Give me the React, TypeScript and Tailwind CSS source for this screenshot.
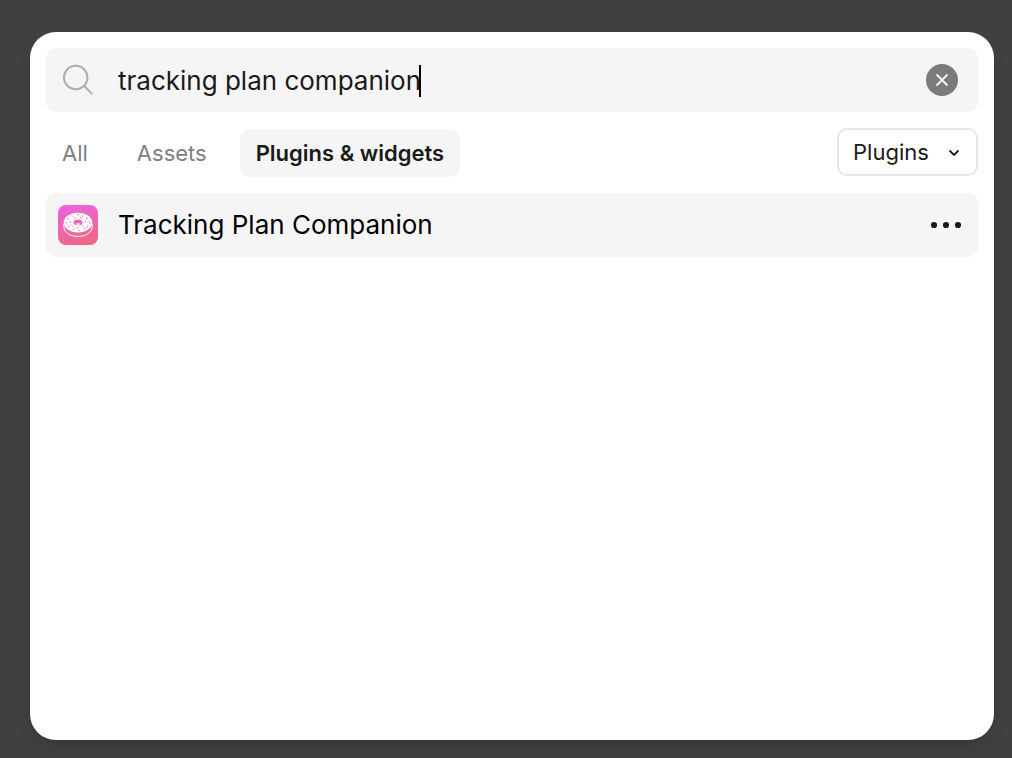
import { useState } from "react";

const sprinkles = [
  "M9.3 13.6l1 .7", "M14 10.6l.9.9", "M19.6 9.9l1.2-.4", "M25 10.6l-.6 1", "M29.5 13.2l-1.2.4",
  "M7.9 17.8l1.2-.4", "M12.3 16.4l.4 1.2", "M16.4 13.3l1.1-.5", "M22.3 12.5l1.1.5", "M27.2 16l.3 1.2",
  "M31.3 17l.4 1.1", "M9.9 21.5l1.1.3", "M13.8 20.4l1 .8", "M15 24.4l1-.6", "M19.2 22.7l1.2.3",
  "M20.8 25.6l1.1-.4", "M24.4 21.6l.8-.9", "M26.4 24l.7-1", "M29.7 20.8l-.4 1.2",
];

function DonutIcon() {
  return (
    <svg aria-hidden="true" className="size-10 shrink-0" viewBox="0 0 40 40" fill="none">
      <defs>
        <linearGradient id="pink" x1="0.35" y1="0" x2="0.65" y2="1">
          <stop stopColor="#ec63dc" />
          <stop offset="1" stopColor="#f06882" />
        </linearGradient>
      </defs>
      <rect width="40" height="40" rx="8" fill="url(#pink)" />
      <path d="M5.8 19v2.5c0 5.7 6.2 10 14.2 10s14.2-4.3 14.2-10V19" stroke="white" />
      <ellipse cx="20" cy="17.6" rx="14.3" ry="9.9" fill="white" />
      <ellipse cx="20" cy="17.4" rx="4.5" ry="2.9" fill="#ed65bb" />
      <path d="M17.2 19.1c1.2-1 4.4-1 5.6 0-1.2.9-4.4.9-5.6 0Z" fill="white" />
      <path d={sprinkles.join("")} stroke="#ed65b5" strokeWidth="0.9" strokeLinecap="round" />
    </svg>
  );
}

export default function App() {
  const [query, setQuery] = useState("tracking plan companion");
  return (
    <div className="flex min-h-screen flex-col bg-[#404040] pt-8 pr-[18px] pb-[18px] pl-[30px] font-['Inter',sans-serif] text-[#1a1a1a]">
      <main className="flex-1 rounded-[26px] bg-white p-4 shadow-lg">
        <div className="flex h-16 items-center rounded-[10px] bg-[#f5f5f5] pr-5 pl-4">
          <svg aria-hidden="true" className="size-8 shrink-0" viewBox="0 0 32 32" fill="none" stroke="#adadad" strokeWidth="2">
            <circle cx="13.7" cy="13.5" r="11.7" />
            <path d="m22 21.8 8.6 8.6" />
          </svg>
          <div className="relative ml-6 flex min-w-0 flex-1 pt-0.5">
            <input
              aria-label="Search"
              value={query}
              onChange={(e) => setQuery(e.target.value)}
              className="w-full min-w-0 bg-transparent text-[26px] leading-8 caret-transparent outline-none"
            />
            <span aria-hidden="true" className="pointer-events-none absolute inset-y-0 left-0 flex items-end text-[26px] leading-8 whitespace-pre">
              <span className="invisible">{query}</span>
              <span className="-ml-0.5 h-8 w-0.5 bg-black" />
            </span>
          </div>
          <button aria-label="Clear search" onClick={() => setQuery("")} className="size-8 shrink-0 rounded-full bg-[#7b7b7b]">
            <svg viewBox="0 0 32 32" fill="none" stroke="#f5f5f5" strokeWidth="1.9" strokeLinecap="round">
              <path d="m11 11 10 10m0-10L11 21" />
            </svg>
          </button>
        </div>
        <div className="mt-4 flex items-start justify-between">
          <nav className="mt-px flex h-12 gap-[17px] text-[22px] text-[#808080]">
            <button className="px-4">All</button>
            <button className="px-4">Assets</button>
            <button className="rounded-[10px] bg-[#f5f5f5] px-4 font-semibold text-[#1a1a1a]">Plugins &amp; widgets</button>
          </nav>
          <div className="relative">
            <select aria-label="Resource type" className="block h-12 w-[141px] appearance-none rounded-[10px] border-2 border-[#e6e6e6] bg-white pl-3.5 text-[22px] outline-none">
              <option>Plugins</option>
            </select>
            <svg aria-hidden="true" className="pointer-events-none absolute top-4 right-4 size-4" viewBox="0 0 16 16" fill="none" stroke="#1a1a1a" strokeWidth="1.8" strokeLinecap="round">
              <path d="m4 7 4 4 4-4" />
            </svg>
          </div>
        </div>
        <div className="mt-4 flex h-16 items-center rounded-[10px] bg-[#f5f5f5] pr-4 pl-3">
          <DonutIcon />
          <span className="ml-5 flex-1 text-[26px] leading-8 text-black">Tracking Plan Companion</span>
          <button aria-label="More options" className="size-8">
            <svg viewBox="0 0 32 32" fill="#1a1a1a">
              <circle cx="4" cy="16" r="3.1" />
              <circle cx="16" cy="16" r="3.1" />
              <circle cx="28" cy="16" r="3.1" />
            </svg>
          </button>
        </div>
      </main>
    </div>
  );
}
